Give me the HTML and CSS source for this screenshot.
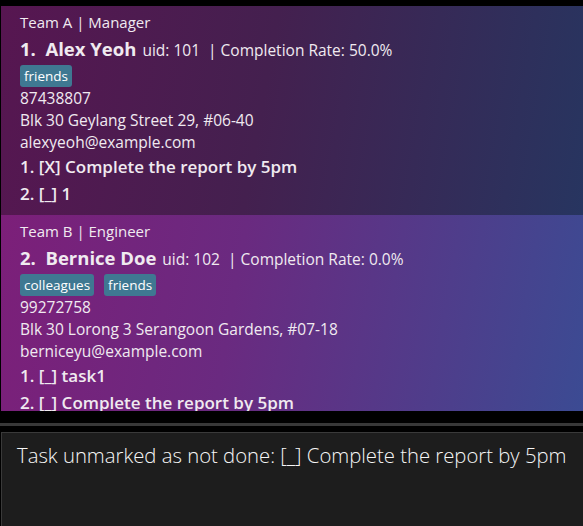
FILE: index.html
```html
<!DOCTYPE html>
<html>
<head>
<meta charset="utf-8">
<link rel="stylesheet" href="styles.css">
</head>
<body>
<div class="app">
  <div class="list">
    <div class="card card-a">
      <div class="team">Team A | Manager</div>
      <div class="head"><span class="name">1.&nbsp;&nbsp;Alex Yeoh</span><span class="meta">uid: 101&nbsp;&nbsp;| Completion Rate: 50.0%</span></div>
      <div class="tags"><span class="tag">friends</span></div>
      <div class="line">87438807</div>
      <div class="line">Blk 30 Geylang Street 29, #06-40</div>
      <div class="line">alexyeoh@example.com</div>
      <div class="task">1. [X] Complete the report by 5pm</div>
      <div class="task">2. [_] 1</div>
    </div>
    <div class="card card-b">
      <div class="team">Team B | Engineer</div>
      <div class="head"><span class="name">2.&nbsp;&nbsp;Bernice Doe</span><span class="meta">uid: 102&nbsp;&nbsp;| Completion Rate: 0.0%</span></div>
      <div class="tags"><span class="tag">colleagues</span><span class="tag">friends</span></div>
      <div class="line">99272758</div>
      <div class="line">Blk 30 Lorong 3 Serangoon Gardens, #07-18</div>
      <div class="line">berniceyu@example.com</div>
      <div class="task">1. [_] task1</div>
      <div class="task">2. [_] Complete the report by 5pm</div>
    </div>
  </div>
  <div class="divider"></div>
  <div class="result">Task unmarked as not done: [_] Complete the report by 5pm</div>
</div>
</body>
</html>
```

FILE: styles.css
```css
html, body {
  margin: 0;
  padding: 0;
  background: #000;
}
.app {
  width: 583px;
  height: 526px;
  display: flex;
  flex-direction: column;
  font-family: "Open Sans", "Noto Sans", sans-serif;
  color: #f0eaf0;
}
.list {
  margin-top: 6px;
  margin-left: 1px;
  height: 405px;
  overflow: hidden;
  flex: none;
}
.card {
  box-sizing: border-box;
  padding: 6px 19px 0;
  display: flex;
  flex-direction: column;
}
.card-a {
  height: 209px;
  background: linear-gradient(100deg, #571651 0%, #44204f 45%, #273560 100%);
}
.card-b {
  height: 210px;
  background: linear-gradient(100deg, #7c1f79 0%, #6a2a80 40%, #3b4b93 100%);
}
.team {
  font-size: 15px;
  line-height: 20px;
}
.head {
  display: flex;
  align-items: baseline;
  margin-top: 4px;
  height: 25px;
}
.name {
  font-size: 18.5px;
  font-weight: 700;
  margin-right: 6px;
}
.meta {
  font-size: 15.5px;
}
.tags {
  display: flex;
  gap: 10px;
  margin-top: 4px;
  height: 22px;
}
.tag {
  background: #3f7892;
  color: #fff;
  font-size: 13.5px;
  line-height: 22px;
  padding: 0 4px;
  border-radius: 3px;
}
.line {
  font-size: 15.5px;
  line-height: 22px;
}
.task {
  font-size: 17px;
  font-weight: 600;
  line-height: 26px;
  margin-top: 1px;
}
.divider {
  margin-top: 12px;
  height: 3px;
  background: #383838;
  flex: none;
}
.result {
  margin-top: 6px;
  margin-left: 1px;
  flex: 1;
  background: #1d1d1d;
  border: 1px solid #3a3a3a;
  border-right: none;
  border-bottom: none;
  padding: 8px 15px;
  font-size: 20.3px;
  font-weight: 300;
  color: #f6f6f6;
}
```
